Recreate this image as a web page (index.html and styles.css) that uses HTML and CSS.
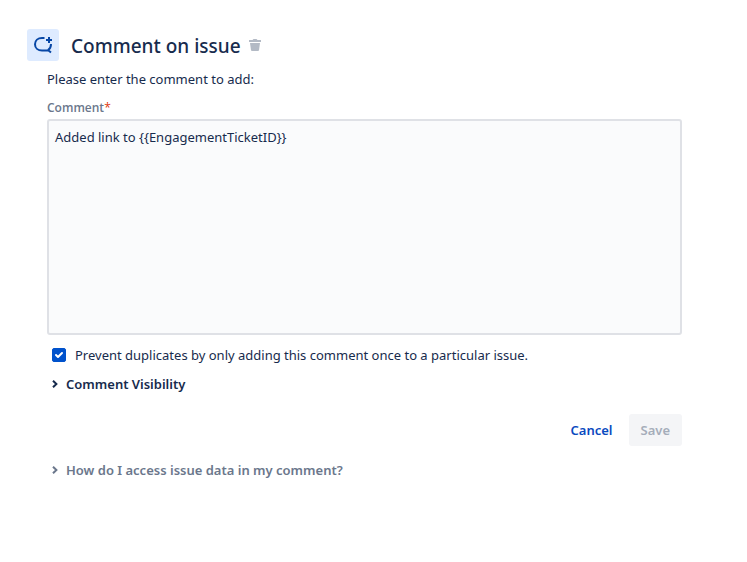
FILE: index.html
```html
<!DOCTYPE html>
<html lang="en">
  <head>
    <title>Comment on issue</title>
    <meta charset="utf-8">
    <link rel="stylesheet" href="styles.css">
  </head>

  <body>
    <form class="action">
      <div class="header">
        <span class="header-icon">
          <svg width="20" height="20" viewBox="0 0 20 20" fill="none" stroke="#0747a6" stroke-width="2">
            <path d="M11.500 3H9C5 3 2 5.500 2 9.200s3 6.300 7 6.300h6.500l2.500 2M15 15.200c2-1.200 3-3.200 3-6.200"/>
            <path d="M16 2v6M13 5h6"/>
          </svg>
        </span>
        <h1 class="title">Comment on issue</h1>
        <button class="delete" type="button" aria-label="Delete">
          <svg width="12" height="12" viewBox="0 0 12 12" fill="#b3bac5">
            <path d="M0 1h3.500L4.500 0h3l1 1H12v2H0zM1 4h10l-1 7.200q-.2.800-1 .8H3q-.8 0-1-.8z"/>
          </svg>
        </button>
      </div>

      <div class="content">
        <p class="intro">Please enter the comment to add:</p>
        <label class="label" for="comment">Comment<span class="required">*</span></label>
        <textarea class="comment" id="comment" spellcheck="false">Added link to {{EngagementTicketID}}</textarea>

        <div class="check-row">
          <input class="check" type="checkbox" id="once" checked>
          <label for="once">Prevent duplicates by only adding this comment once to a particular issue.</label>
        </div>

        <details class="expander">
          <summary>
            <svg class="chevron" width="6" height="8" viewBox="0 0 6 8"><path d="M1 .700L4.400 4 1 7.300"/></svg>
            Comment Visibility
          </summary>
        </details>

        <div class="buttons">
          <button class="button cancel" type="button">Cancel</button>
          <button class="button save" type="submit" disabled>Save</button>
        </div>

        <details class="expander help">
          <summary>
            <svg class="chevron" width="6" height="8" viewBox="0 0 6 8"><path d="M1 .700L4.400 4 1 7.300"/></svg>
            How do I access issue data in my comment?
          </summary>
        </details>
      </div>
    </form>
  </body>
</html>
```

FILE: styles.css
```css
* {
  box-sizing: border-box;
}
body {
  margin: 0;
  background: #fff;
  color: #172b4d;
  font: 13px/20px "Noto Sans", "Open Sans", sans-serif;
}
.action {
  padding: 29px 65px 29px 27px;
}

.header {
  display: flex;
  align-items: center;
}
.header-icon {
  display: flex;
  align-items: center;
  justify-content: center;
  width: 32px;
  height: 32px;
  margin-right: 12px;
  border-radius: 3px;
  background: #deebff;
}
.title {
  margin: 0;
  padding-top: 2px;
  font-size: 19px;
  line-height: 30px;
  font-weight: 500;
}
.delete {
  display: flex;
  margin-left: 8px;
  padding: 0;
  border: 0;
  background: none;
}

.content {
  padding-left: 20px;
}
.intro {
  margin: 8px 0;
}
.label {
  display: block;
  padding-top: 2px;
  margin-bottom: 2px;
  color: #6b778c;
  font-size: 12px;
  line-height: 18px;
  font-family: "Open Sans", "Noto Sans", sans-serif;
  font-weight: 600;
}
.required {
  color: #de350b;
  font-weight: 400;
}
.comment {
  display: block;
  width: 100%;
  height: 216px;
  padding: 6px;
  border: 2px solid #dfe1e6;
  border-radius: 3px;
  background: #fafbfc;
  color: #172b4d;
  font: inherit;
  resize: none;
}

.check-row {
  display: flex;
  align-items: center;
  gap: 9px;
  margin-top: 10px;
  padding-left: 5px;
}
.check {
  appearance: none;
  width: 14px;
  height: 14px;
  margin: 0;
  border: 1px solid #dfe1e6;
  border-radius: 2px;
}
.check:checked {
  border-color: #0052cc;
  background: #0052cc url("data:image/svg+xml,%3Csvg xmlns='http://www.w3.org/2000/svg' viewBox='0 0 12 12'%3E%3Cpath d='M3 6l2 2 4-4' fill='none' stroke='white' stroke-width='2' stroke-linecap='round' stroke-linejoin='round'/%3E%3C/svg%3E") center / 12px no-repeat;
}

.expander {
  margin-top: 9px;
  font-weight: 600;
}
.expander summary {
  display: flex;
  align-items: center;
  gap: 8px;
  padding-left: 5px;
  list-style: none;
}
.chevron {
  fill: none;
  stroke: currentColor;
  stroke-width: 2;
}
.help {
  margin-top: 14px;
  color: #6b778c;
}

.buttons {
  display: flex;
  justify-content: flex-end;
  gap: 4px;
  margin-top: 20px;
}
.button {
  height: 32px;
  padding: 0 12px;
  border: 0;
  border-radius: 3px;
  background: none;
  font: inherit;
  font-weight: 600;
}
.cancel {
  color: #0a4abf;
}
.save {
  background: #f4f5f7;
  color: #a5adba;
}
```
